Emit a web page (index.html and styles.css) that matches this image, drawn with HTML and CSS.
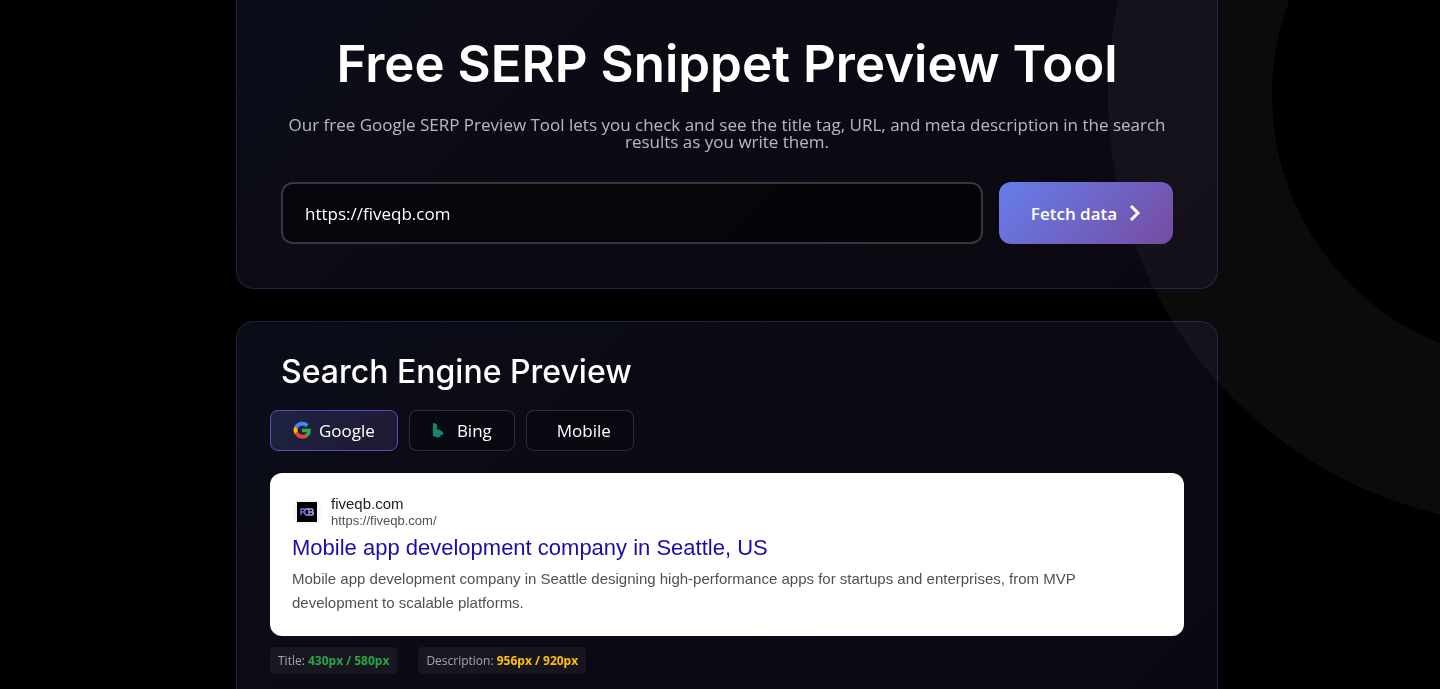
FILE: index.html
```html
<!DOCTYPE html>
<html lang="en">
<head>
    <meta charset="UTF-8">
    <meta name="viewport" content="width=device-width, initial-scale=1.0">
    <title>Free SERP Snippet Preview Tool</title>
    <link rel="stylesheet" href="styles.css">
</head>
<body>

    <div class="ring"></div>

    <main class="container">
        <section class="card hero">
            <h1>Free SERP Snippet Preview Tool</h1>
            <p class="intro">Our free Google SERP Preview Tool lets you check and see the title tag, URL, and meta description in the search results as you write them.</p>
            <form class="fetch-form">
                <input type="text" class="url-input" aria-label="Website URL" value="https://fiveqb.com">
                <button type="button" class="fetch-btn">
                    Fetch data
                    <svg width="12" height="18" viewBox="0 0 12 18" fill="none" stroke="#fff" stroke-width="3"><path d="M2 2l7 7-7 7"/></svg>
                </button>
            </form>
        </section>

        <section class="card preview">
            <h2>Search Engine Preview</h2>
            <div class="tabs">
                <button type="button" class="tab active">
                    <svg width="18" height="20" viewBox="0 0 18 20" fill="none" stroke-width="4">
                        <path stroke="#FBBC05" d="M3.300 6.500Q1.800 9 3.300 12"/>
                        <path stroke="#4285F4" d="M3.100 6.300C5.500 2.300 11 1.600 14.300 4.700"/>
                        <path stroke="#EA4335" d="M3.100 11.500C5.200 15.900 10.300 16.900 13.500 14.500"/>
                        <path stroke="#34A853" d="M9 9.500h7C16 12 14.700 13.600 13.200 14.700" stroke-width="3.500"/>
                    </svg>
                    Google
                </button>
                <button type="button" class="tab bing">
                    <svg width="12" height="18" viewBox="0 0 12 18"><path fill="#0c8a74" d="M1 1l4 1v6l1-1 5 3v3l-3 0 1 1.500L5 15.500 1 14z"/></svg>
                    Bing
                </button>
                <button type="button" class="tab mobile">Mobile</button>
            </div>

            <article class="result">
                <div class="site">
                    <span class="favicon">
                        <svg width="20" height="20" viewBox="0 0 20 20">
                            <defs>
                                <linearGradient id="logo" gradientUnits="userSpaceOnUse" x1="3" x2="17" y1="0" y2="0">
                                    <stop offset="0" stop-color="#8a4fd0"/>
                                    <stop offset="1" stop-color="#a0b4f4"/>
                                </linearGradient>
                            </defs>
                            <rect width="20" height="20" fill="#000"/>
                            <g fill="none" stroke="url(#logo)" stroke-width="1.500">
                                <path d="M4 13V7h4M4 10h3"/>
                                <path d="M12 7.500A3 3 0 1 0 12 12.500"/>
                                <path d="M12 7h3q2 1.500 0 3q3 1.500 0 3h-3zM12 10h3"/>
                            </g>
                        </svg>
                    </span>
                    <div>
                        <div class="site-name">fiveqb.com</div>
                        <div class="site-url">https://fiveqb.com/</div>
                    </div>
                </div>
                <a href="#" class="result-title">Mobile app development company in Seattle, US</a>
                <p class="result-text">Mobile app development company in Seattle designing high-performance apps for startups and enterprises, from MVP development to scalable platforms.</p>
            </article>

            <div class="counters">
                <span class="counter">Title: <b class="good">430px / 580px</b></span>
                <span class="counter">Description: <b class="warn">956px / 920px</b></span>
            </div>
        </section>
    </main>

</body>
</html>
```
FILE: styles.css
```css
* {
    box-sizing: border-box;
}

body {
    margin: 0;
    padding-left: 14px;
    background: #000;
    color: #fff;
    font-family: "Open Sans", "Noto Sans", sans-serif;
    overflow-x: hidden;
}

/* big circle behind the cards */
.ring {
    position: fixed;
    top: -336px;
    right: -530px;
    width: 862px;
    height: 862px;
    border: 164px solid rgba(255, 255, 255, 0.045);
    border-radius: 50%;
}

.container {
    position: relative;
    max-width: 982px;
    margin: 0 auto;
}

.card {
    background: linear-gradient(135deg, rgba(102, 126, 234, 0.1), rgba(118, 75, 162, 0.1));
    border: 1px solid rgba(102, 126, 234, 0.2);
    border-radius: 18px;
}

.hero {
    border-top: none;
    border-radius: 0 0 18px 18px;
    padding: 30px 44px 44px;
    margin-bottom: 32px;
    text-align: center;
}

h1, h2 {
    margin: 0;
    font-family: Inter, sans-serif;
    font-weight: 500;
}

h1 {
    font-size: 51px;
    line-height: 68px;
    font-weight: 600;
}

.intro {
    margin: 18px 0 32px;
    color: rgba(255, 255, 255, 0.7);
    font-size: 17px;
    line-height: 17px;
}

.fetch-form {
    display: flex;
    gap: 16px;
}

.url-input {
    flex: 1;
    min-width: 0;
    height: 62px;
    padding: 0 22px;
    background: rgba(0, 0, 0, 0.5);
    border: 2px solid rgba(255, 255, 255, 0.2);
    border-radius: 12px;
    color: #fff;
    font-family: inherit;
    font-size: 17px;
}

.fetch-btn {
    display: flex;
    align-items: center;
    justify-content: center;
    gap: 12px;
    width: 174px;
    background: linear-gradient(135deg, #667eea, #764ba2);
    border: none;
    border-radius: 12px;
    color: #fff;
    font-family: inherit;
    font-size: 17px;
    font-weight: 600;
    cursor: pointer;
}

.preview {
    padding: 28px 33px 40px;
}

h2 {
    padding-left: 11px;
    font-size: 32px;
    line-height: 44px;
}

.tabs {
    display: flex;
    gap: 11px;
    margin: 16px 0 22px;
}

.tab {
    display: flex;
    align-items: center;
    gap: 8px;
    height: 41px;
    padding: 0 22px;
    background: rgba(0, 0, 0, 0.2);
    border: 1px solid rgba(255, 255, 255, 0.15);
    border-radius: 8px;
    color: #fff;
    font-family: inherit;
    font-size: 17px;
    cursor: pointer;
}

.tab.active {
    background: linear-gradient(135deg, rgba(102, 126, 234, 0.2), rgba(118, 75, 162, 0.2));
    border-color: #5a4fb0;
}

.tab.bing {
    gap: 13px;
}

.tab.mobile {
    padding-left: 30px;
}

.result {
    padding: 22px 22px 21px;
    background: #fff;
    border-radius: 12px;
    font-family: "Liberation Sans", Arial, sans-serif;
}

.site {
    display: flex;
    align-items: center;
    gap: 9px;
    margin-bottom: 6px;
}

.favicon {
    display: flex;
    align-items: center;
    justify-content: center;
    width: 30px;
    height: 30px;
    background: #f8f8f9;
    border-radius: 50%;
}

.site-name {
    color: #202124;
    font-size: 15px;
    line-height: 18px;
}

.site-url {
    color: #4d5156;
    font-size: 13px;
    line-height: 15px;
}

.result-title {
    display: block;
    color: #1a0dab;
    font-size: 22px;
    line-height: 28px;
    text-decoration: none;
}

.result-text {
    margin: 5px 0 0;
    color: #4d5156;
    font-size: 15px;
    line-height: 24px;
}

.counters {
    display: flex;
    gap: 21px;
    margin-top: 11px;
}

.counter {
    padding: 0 8px;
    background: rgba(255, 255, 255, 0.05);
    border-radius: 4px;
    color: rgba(255, 255, 255, 0.6);
    font-size: 12px;
    line-height: 27px;
}

.good {
    color: #28a745;
}

.warn {
    color: #ffc107;
}
```
